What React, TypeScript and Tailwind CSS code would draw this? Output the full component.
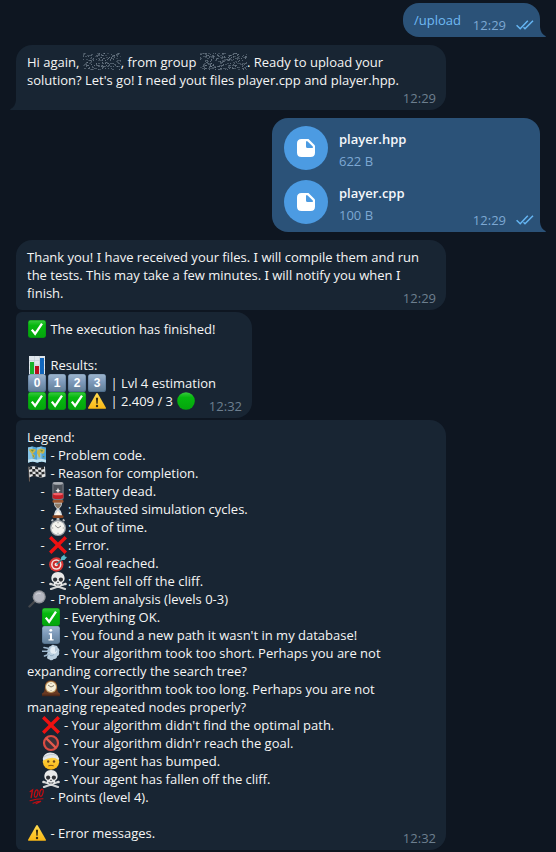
import type { ReactNode } from "react";

type IconName =
  | "check" | "chart" | "k0" | "k1" | "k2" | "k3" | "warn" | "green" | "map" | "flag"
  | "battery" | "hourglass" | "watch" | "cross" | "target" | "skull" | "lens" | "info"
  | "dash" | "clock" | "ban" | "bandage" | "hundred";

function keycap(label: string): ReactNode {
  return (
    <>
      <rect x="0" y="0" width="18" height="18" rx="2.6" fill="#4f6d8b" />
      <rect x="0.4" y="0.3" width="17.2" height="16.6" rx="2.3" fill="url(#steel)" />
      <text x="9" y="13.2" textAnchor="middle" fontSize="12" fontWeight="700" fill="#fff" fontFamily="'Liberation Sans', Arial, sans-serif">{label}</text>
    </>
  );
}

const ART: Record<IconName, ReactNode> = {
  check: (
    <>
      <rect width="18" height="18" rx="2.4" fill="#078d12" />
      <rect x="0.5" y="0.4" width="17" height="16.9" rx="2" fill="url(#leaf)" />
      <path d="M3.8 9.6 7.1 13.8 14 3.6" fill="none" stroke="#fff" strokeWidth="2.3" />
    </>
  ),
  chart: (
    <>
      <rect x="1" width="16" height="18" fill="#dfe6ec" />
      <path d="M1 4.5H17M1 9H17M1 13.5H17M6.5 0V18M11.5 0V18" stroke="#bfcbd5" strokeWidth="0.6" />
      <rect x="2" y="6" width="4" height="12" fill="#16b32a" />
      <rect x="7" y="10" width="4" height="8" fill="#b80d1c" />
      <rect x="12" y="2" width="4" height="16" fill="#1267bd" />
    </>
  ),
  k0: keycap("0"),
  k1: keycap("1"),
  k2: keycap("2"),
  k3: keycap("3"),
  warn: (
    <>
      <path d="M8.2 1.6q.8-1.3 1.6 0l8 14q.5 1.2-.8 1.2H1q-1.3 0-.8-1.2Z" fill="url(#sun)" />
      <path d="M7.9 5.8h2.2l-.5 6H8.4Z" fill="#372c12" />
      <circle cx="9" cy="14" r="1.2" fill="#372c12" />
    </>
  ),
  green: <circle cx="9" cy="9" r="8.8" fill="url(#leaf)" />,
  map: (
    <>
      <path d="M0 1.5 4.500.5 9 1.500 13.500.5 18 1.500V16.500L13.500 15.500 9 16.500 4.500 15.500 0 16.500Z" fill="#4fa3d6" />
      <path d="M4.500.5V15.500L0 16.500V1.500ZM13.500.5V15.500L9 16.500V1.500Z" fill="#84c3e6" />
      <path d="M0 13.800 4.500 12.800 9 13.800 13.500 12.800 18 13.800V16.500L13.500 15.500 9 16.500 4.500 15.500 0 16.500Z" fill="#bfe0ee" />
      <path d="M1 3.500 5 2.800l3 1-2 3-1.500.7 2.500 2-1.200 3.500L4.300 10 3.500 7.500 1.500 5ZM9.500 4 13 2.500l4 1-1 3.500-2 1-1-1.500-1 1 .3 3-1.300 1.500L10 9 8.800 7.300Z" fill="#c9b64a" />
      <path d="M2.500 3.800 6 3.800 4.500 5.800ZM12 3.800l3 .3-1 2.200ZM4.700 9 6 9.800 5.300 11.500ZM14.500 10l2 .3-.7 1.500Z" fill="#6f8f40" />
    </>
  ),
  flag: (
    <>
      <path d="M.8 2.500 1.500 17.500" stroke="#6c5e54" strokeWidth="1" />
      <path d="M.8 3.500Q5 1.500 9 3T17 2.500L17.500 12.500Q13 14.500 9.500 12.800T1.400 13.500Z" fill="#e5e5e5" />
      <path d="M1.200 3.500l2.800-1 .2 2.500-2.800.8ZM7 2.500l3 .7.2 2.400-3-.6ZM13 3.300l3-.6.2 2.400-3 .6ZM4.200 5l3 .1.2 2.500-3 .1ZM10.200 5.700l3 .1.2 2.400-3-.1ZM1.600 8l2.800-.5.2 2.600-2.800.5ZM7.400 7.500l3 .6.2 2.400-3-.5ZM13.400 8.200l3-.6.2 2.400-3 .6ZM4.600 10.100l3 0 .2 2.500-3 .1ZM10.600 10.600l3 0 .2 2.600-3-.1Z" fill="#292b2d" />
    </>
  ),
  battery: (
    <>
      <rect x="3.300" y="0" width="11.400" height="18" rx="2" fill="#737982" />
      <rect x="4.500" y="1" width="9" height="11" rx="1" fill="#4a5058" />
      <ellipse cx="9" cy="1.400" rx="5" ry="1.300" fill="#a9aeb4" />
      <path d="M3.600 11.500q5.400 2 10.800 0v4.400q-5.400 2.400-10.800 0Z" fill="#c22028" />
      <ellipse cx="9" cy="12" rx="5" ry="1.300" fill="#f0626a" />
      <path d="M9 5.800l.8 2 1.800 1-1.800.7L9 11l-.8-1.500-1.800-.7 1.800-1Z" fill="#eceef0" />
    </>
  ),
  hourglass: (
    <>
      <path d="M5 2h8q.6 4.500-2.900 7 3.500 2.500 2.900 7H5q-.6-4.500 2.900-7Q4.400 6.500 5 2Z" fill="#cfd8df" />
      <path d="M5.400 3.500h7.200Q11.800 7 9 8.600 6.200 7 5.400 3.500Z" fill="#8f7c68" />
      <path d="M9 10.500l3.500 5.100H5.500Z" fill="#fff6ea" />
      <rect x="3.500" y="0" width="11" height="2.800" rx="1.200" fill="#9a552f" />
      <rect x="3.500" y="15.300" width="11" height="2.700" rx="1.200" fill="#85431f" />
    </>
  ),
  watch: (
    <>
      <rect x="7.500" y="0" width="3" height="3" rx="0.800" fill="#b9bdc0" />
      <path d="M2.500 3 4.200 1.500M15.500 3 13.800 1.500" stroke="#aeb3b7" strokeWidth="1.800" />
      <circle cx="9" cy="10" r="8" fill="#9ea4a9" />
      <circle cx="9" cy="10" r="6.700" fill="#f4f3ee" />
      <path d="M9 10 6 7.400M9 10l3-2M9 4.200v1M9 14.800v1M3.200 10h1M13.800 10h1" stroke="#777" strokeWidth="0.800" />
    </>
  ),
  cross: (
    <path d="M2.400 0 9 6.600 15.600 0 18 2.400 11.400 9 18 15.600 15.600 18 9 11.400 2.400 18 0 15.600 6.600 9 0 2.400Z" fill="#ee1111" />
  ),
  target: (
    <>
      <circle cx="7.300" cy="10.500" r="7.200" fill="#d83332" />
      <circle cx="7.300" cy="10.500" r="5.200" fill="#f1dedd" />
      <circle cx="7.300" cy="10.500" r="3.700" fill="#cb2a2a" />
      <circle cx="7.300" cy="10.500" r="1.700" fill="#f6e8e7" />
      <path d="M7.500 10.500 14.500 4" stroke="#357f8c" strokeWidth="1.500" />
      <path d="M11.800 6 12.300 3 15.500.5l.3 2 2.200.5-2.500 2.900Z" fill="#57bac8" />
    </>
  ),
  skull: (
    <>
      <path d="M2 12 16 17M16 12 2 17" stroke="#cfd1d2" strokeWidth="2.200" strokeLinecap="round" />
      <circle cx="1.500" cy="12" r="1.300" fill="#dcdddd" />
      <circle cx="16.500" cy="12" r="1.300" fill="#dcdddd" />
      <path d="M9 0C4.500 0 2.200 3 2.400 7q.1 2.500 2.300 3.400l.5 3.700q3.800 2.200 7.600 0l.5-3.700q2.200-.9 2.300-3.400C15.800 3 13.500 0 9 0Z" fill="#e9eaea" />
      <circle cx="6.100" cy="7.600" r="2.100" fill="#303338" />
      <circle cx="11.900" cy="7.600" r="2.100" fill="#303338" />
      <path d="M9 9.300 10 11H8Z" fill="#383b40" />
      <path d="M6 12.500q3 1.200 6 0M7.500 12v2M9 12.300v2M10.500 12v2" stroke="#64686c" strokeWidth="0.600" fill="none" />
    </>
  ),
  lens: (
    <>
      <path d="M7 11 1.500 16.500" stroke="#44474c" strokeWidth="2.400" strokeLinecap="round" />
      <circle cx="11.200" cy="6.800" r="6.600" fill="#8f9298" />
      <circle cx="11.200" cy="6.800" r="5.300" fill="#b3b6bf" />
      <path d="M8 4.500q2-2 5-.7" stroke="#d0d2d9" strokeWidth="1" fill="none" />
    </>
  ),
  info: (
    <>
      <rect width="18" height="18" rx="2.400" fill="#54718c" />
      <rect x="0.400" y="0.300" width="17.200" height="16.800" rx="2" fill="url(#steel)" />
      <circle cx="8.800" cy="4.300" r="1.400" fill="#fff" />
      <path d="M6.800 7.300h3.200v6h1.600v1.200H6.500v-1.200H8V8.500H6.800Z" fill="#fff" />
    </>
  ),
  dash: (
    <>
      <path d="M9 2q1.500-2 3.800-.5 2.800-.3 3 2.300 2.500 1.600 1.200 4.200 1 3-1.900 4.300-.4 3-3.300 2.700-2.300 2.400-4.300.4-2.600.2-2.500-2.600 1.500-1.300 0-2.800 1.200-2.500 0-4Q6.500 5.500 6.500 4.300 7 2 9 2Z" fill="#b9cede" />
      <path d="M10.500 2.500q3 0 3.500 3 2 2-.5 4-3.500 1.200-5-1.500-1-4 2-5.500Z" fill="#e4edf4" />
      <path d="M7 4.500 2 3.500M7 7.300H.5M7 10.300 2.500 12" stroke="#9eb8ce" strokeWidth="1.600" strokeLinecap="round" />
      <path d="M8 11.500q2.500 1 4-1M13.500 4.500q1 1.500 0 3" stroke="#88a4bc" strokeWidth="0.800" fill="none" />
    </>
  ),
  clock: (
    <>
      <path d="M0 16V13.500q2.800-.8 2.800-6Q2.800.3 9 .3t6.200 7.200q0 5.200 2.800 6V16Z" fill="#693922" />
      <path d="M0 14.600h18V16.200H0Z" fill="#4d2819" />
      <circle cx="9" cy="7" r="6" fill="#b9945b" />
      <circle cx="9" cy="7" r="5" fill="#f7efd9" />
      <path d="M9 7 6 5M9 7l3-1.500M9 3v.7M9 10.300v.7" stroke="#675d4c" strokeWidth="0.800" />
    </>
  ),
  ban: (
    <>
      <circle cx="9" cy="9" r="7" fill="#3a3038" stroke="#d94b42" strokeWidth="2.200" />
      <path d="M4.100 4.100 13.900 13.900" stroke="#e15b4e" strokeWidth="2.200" />
    </>
  ),
  bandage: (
    <>
      <circle cx="9" cy="9.500" r="8.200" fill="url(#sun)" />
      <path d="M.8 6.500Q2 1 8 .5q7-.3 9.300 6.500l-1 1Q11 3.500 1 8.500Z" fill="#e2e6e9" />
      <path d="M2 5Q8 .8 15.500 3.500" stroke="#aeb9c1" strokeWidth="0.700" fill="none" />
      <circle cx="6.200" cy="9.500" r="1.200" fill="#6c4719" />
      <circle cx="12" cy="9.500" r="1.200" fill="#6c4719" />
      <path d="M6.300 13.800q2.700-1 5.400 0" stroke="#85551b" strokeWidth="1" fill="none" />
    </>
  ),
  hundred: (
    <g fill="none" stroke="#c20d12" strokeLinecap="round">
      <path d="M2.200 3.500 4.500 2 3.200 9.500" strokeWidth="1.400" />
      <ellipse cx="8.200" cy="5.500" rx="1.600" ry="3.700" transform="rotate(14 8.200 5.500)" strokeWidth="1.200" />
      <ellipse cx="13.400" cy="4.700" rx="1.600" ry="3.700" transform="rotate(14 13.400 4.700)" strokeWidth="1.200" />
      <path d="M2 12.800Q8 10.800 15 10.800M5 15.300Q9 13.300 13 13.300L8 15.800" strokeWidth="1.100" />
    </g>
  ),
};

function Emoji({ name }: { name: IconName }) {
  return (
    <span className="flex h-[18px] w-5 shrink-0 justify-center">
      <svg className="h-[18px] w-[18px]" viewBox="0 0 18 18">{ART[name]}</svg>
    </span>
  );
}

function Gradients() {
  return (
    <svg className="absolute h-0 w-0">
      <defs>
        <linearGradient id="leaf" x2="0" y2="1"><stop stopColor="#38c93e" /><stop offset="0.300" stopColor="#06b80f" /><stop offset="1" stopColor="#04a50d" /></linearGradient>
        <linearGradient id="steel" x2="0" y2="1"><stop stopColor="#9db5cd" /><stop offset="0.450" stopColor="#7e9aba" /><stop offset="1" stopColor="#638099" /></linearGradient>
        <linearGradient id="sun" x2="0" y2="1"><stop stopColor="#ffdc52" /><stop offset="1" stopColor="#f9b714" /></linearGradient>
      </defs>
    </svg>
  );
}

/** Spoiler: a patch of sparse particles over hidden text. */
function Spoiler({ width, seed }: { width: number; seed: number }) {
  const dots: ReactNode[] = [];
  let s = seed;
  for (let y = 0; y < 17; y++) {
    for (let x = 0; x < width; x++) {
      s = (s * 48271) % 2147483647;
      const r = s / 2147483647;
      if (r < 0.25) {
        dots.push(<rect key={`${x}-${y}`} x={x} y={y} width={r < 0.12 ? 2 : 1} height="1" fill="#8795a2" opacity={0.3 + r * 1.600} />);
      }
    }
  }
  return <svg className="h-[18px] shrink-0" width={width} height="18">{dots}</svg>;
}

function Line({ children }: { children?: ReactNode }) {
  return <div className="flex h-[18px] whitespace-pre">{children}</div>;
}

function Words({ children }: { children: string }) {
  return (
    <span className="whitespace-pre">
      {children.split(/\b(I)\b/).map((part, i) =>
        part === "I" ? <span key={i} className="font-['Noto_Sans',sans-serif]">I</span> : part,
      )}
    </span>
  );
}

function Ticks() {
  return (
    <svg className="ml-[10px] h-[10px] w-[18px]" viewBox="0 0 18 10" fill="none" stroke="#65b5f3" strokeWidth="1.500">
      <path d="M.6 5.300 4.200 8.800 11.800.8M7.500 7.300 9 8.800 17 .8" />
    </svg>
  );
}

function Bubble({ out, tail, time, className, children }: { out?: boolean; tail?: boolean; time: string; className: string; children: ReactNode }) {
  return (
    <div className={`relative shrink-0 ${out ? "self-end bg-[#2b5278]" : "self-start bg-[#182533]"} ${className}`}>
      {children}
      <div className={`absolute bottom-[3px] flex h-[18px] items-center ${out ? "right-[6px] text-[#7da8d3]" : "right-[10px] text-[#6d7f8f]"}`}>
        {time}
        {out && <Ticks />}
      </div>
      {tail && (
        <svg className={`absolute bottom-0 h-[10px] w-[6px] ${out ? "-right-[6px]" : "-left-[6px] -scale-x-100"}`} viewBox="0 0 6 10">
          <path d="M0 0Q.5 6.500 5.600 9 6.500 10 5 10H0Z" fill={out ? "#2b5278" : "#182533"} />
        </svg>
      )}
    </div>
  );
}

function FileRow({ name, size }: { name: string; size: string }) {
  return (
    <div className="flex h-11 gap-[11px]">
      <div className="flex size-11 items-center justify-center rounded-full bg-[#4c9be2]">
        <svg className="size-[18px]" viewBox="0 0 18 18">
          <path d="M4.500 0H11.500L18 6.500V13.500Q18 18 13.500 18H4.500Q0 18 0 13.500V4.500Q0 0 4.500 0Z" fill="#fff" />
          <path d="M9 2.200V7.500Q9 9 10.500 9H15.800V7.600L10.400 2.200Z" fill="#4c9be2" />
        </svg>
      </div>
      <div className="pt-1">
        <div className="h-[22px] font-semibold text-[#f5f8fb]">{name}</div>
        <div className="text-[#7da8d3]">{size}</div>
      </div>
    </div>
  );
}

const LEGEND: { pre?: string; icon?: IconName; text?: string }[] = [
  { text: "Legend:" },
  { icon: "map", text: " - Problem code." },
  { icon: "flag", text: " - Reason for completion." },
  { pre: "    - ", icon: "battery", text: ": Battery dead." },
  { pre: "    - ", icon: "hourglass", text: ": Exhausted simulation cycles." },
  { pre: "    - ", icon: "watch", text: ": Out of time." },
  { pre: "    - ", icon: "cross", text: ": Error." },
  { pre: "    - ", icon: "target", text: ": Goal reached." },
  { pre: "    - ", icon: "skull", text: ": Agent fell off the cliff." },
  { icon: "lens", text: " - Problem analysis (levels 0-3)" },
  { pre: "    ", icon: "check", text: " - Everything OK." },
  { pre: "    ", icon: "info", text: " - You found a new path it wasn't in my database!" },
  { pre: "    ", icon: "dash", text: " - Your algorithm took too short. Perhaps you are not" },
  { text: "expanding correctly the search tree?" },
  { pre: "    ", icon: "clock", text: " - Your algorithm took too long. Perhaps you are not" },
  { text: "managing repeated nodes properly?" },
  { pre: "    ", icon: "cross", text: " - Your algorithm didn't find the optimal path." },
  { pre: "    ", icon: "ban", text: " - Your algorithm didn'r reach the goal." },
  { pre: "    ", icon: "bandage", text: " - Your agent has bumped." },
  { pre: "    ", icon: "skull", text: " - Your agent has fallen off the cliff." },
  { icon: "hundred", text: " - Points (level 4)." },
  {},
  { icon: "warn", text: " - Error messages." },
];

export default function App() {
  return (
    <div className="flex h-[852px] w-[556px] flex-col overflow-hidden bg-[#0e1621] pr-4 pl-4 pt-[3px] font-['Open_Sans','Noto_Sans',sans-serif] text-[13px] leading-[18px] text-[#f5f5f5]">
      <Gradients />
      <Bubble out tail time="12:29" className="h-[34px] w-[137px] rounded-2xl rounded-br-none pt-2 pl-[11px]">
        <Line><span className="text-[#70baf4]">/upload</span></Line>
      </Bubble>
      <Bubble tail time="12:29" className="mt-2 h-[65px] w-[430px] rounded-2xl rounded-bl-none pt-2 pl-[11px]">
        <Line><Words>Hi again, </Words><Spoiler width={38} seed={71} /><Words>, from group </Words><Spoiler width={47} seed={913} /><Words>. Ready to upload your</Words></Line>
        <Line><Words>solution? Let's go! I need yout files player.cpp and player.hpp.</Words></Line>
      </Bubble>
      <Bubble out tail time="12:29" className="mt-2 flex h-[114px] w-[268px] flex-col gap-[10px] rounded-2xl rounded-br-none pt-2 pl-3">
        <FileRow name="player.hpp" size="622 B" />
        <FileRow name="player.cpp" size="100 B" />
      </Bubble>
      <Bubble time="12:29" className="mt-2 h-[70px] w-[430px] rounded-2xl rounded-bl-md pt-2 pl-[11px]">
        <Line><Words>Thank you! I have received your files. I will compile them and run</Words></Line>
        <Line><Words>the tests. This may take a few minutes. I will notify you when I</Words></Line>
        <Line><Words>finish.</Words></Line>
      </Bubble>
      <Bubble time="12:32" className="mt-[2px] h-[106px] w-[236px] rounded-2xl rounded-l-md pt-2 pl-[11px]">
        <Line><Emoji name="check" /><Words> The execution has finished!</Words></Line>
        <Line />
        <Line><Emoji name="chart" /><Words> Results:</Words></Line>
        <Line><Emoji name="k0" /><Emoji name="k1" /><Emoji name="k2" /><Emoji name="k3" /><Words> | Lvl 4 estimation</Words></Line>
        <Line><Emoji name="check" /><Emoji name="check" /><Emoji name="check" /><Emoji name="warn" /><Words> | 2.409 / 3 </Words><Emoji name="green" /></Line>
      </Bubble>
      <Bubble time="12:32" className="mt-[2px] h-[430px] w-[430px] rounded-2xl rounded-l-md pt-2 pl-[11px]">
        {LEGEND.map((row, i) => (
          <Line key={i}>
            {row.pre && <Words>{row.pre}</Words>}
            {row.icon && <Emoji name={row.icon} />}
            {row.text && <Words>{row.text}</Words>}
          </Line>
        ))}
      </Bubble>
    </div>
  );
}
